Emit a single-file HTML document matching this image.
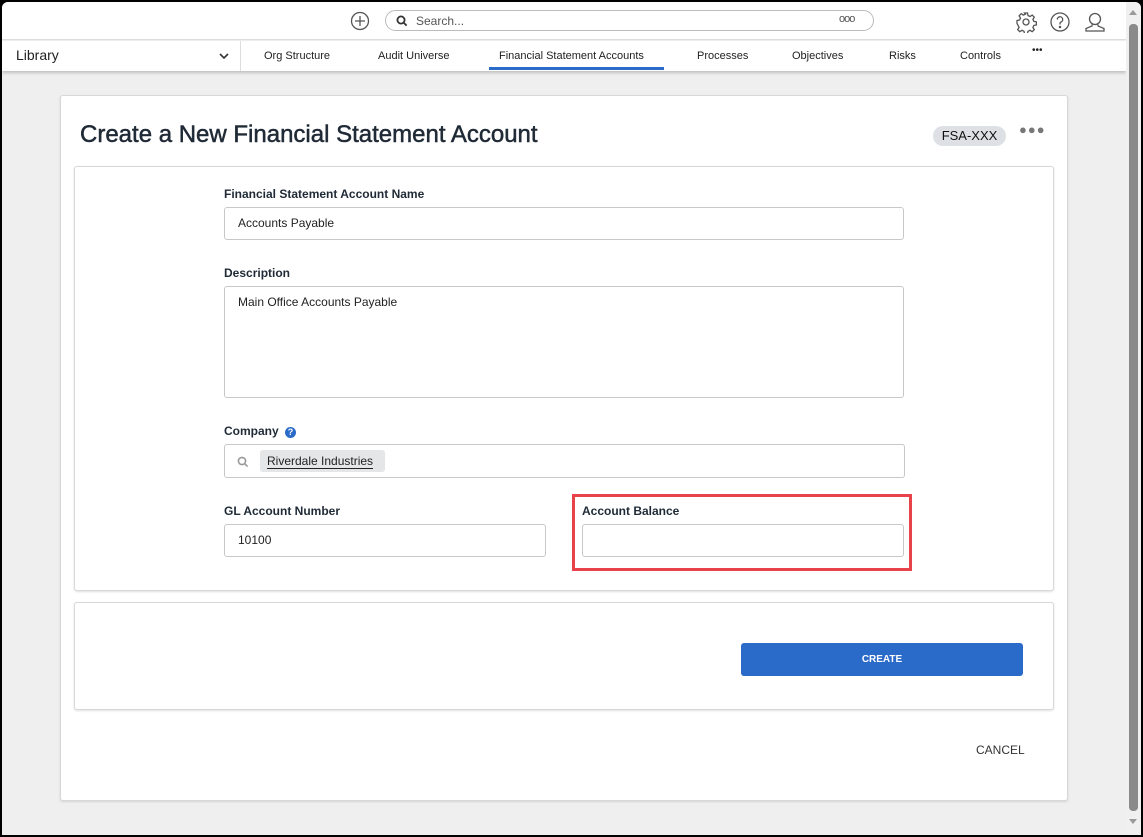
<!DOCTYPE html>
<html><head><style>
*{box-sizing:border-box;margin:0;padding:0}
body{width:1143px;height:837px;background:#000;font-family:"Liberation Sans",sans-serif;overflow:hidden;position:relative;color:#1f2a36}
.win{position:absolute;left:2px;top:2px;width:1139px;height:833px;background:#efefef;border-radius:6px 6px 0 0;overflow:hidden}
.top{position:absolute;left:0;top:0;width:1124px;height:38px;background:#fff;border-bottom:1px solid #ddd}
.nav{position:absolute;left:0;top:39px;width:1124px;height:30px;background:#fff;box-shadow:0 2px 3px rgba(0,0,0,.2)}
.nav span{position:absolute;top:9px;font-size:11px;color:#222}
.abs{position:absolute}
.card{position:absolute;background:#fff;border:1px solid #d8d8d8;border-radius:3px;box-shadow:0 1px 2px rgba(0,0,0,.12)}
.lbl{position:absolute;font-size:12px;font-weight:bold;color:#1f2a36}
.inp{position:absolute;border:1px solid #c8c8c8;border-radius:3px;background:#fff;font-size:12px;color:#222;padding:8px 13px}
.sb{position:absolute;right:0;top:0;width:15px;height:833px;background:#f0f0f0}
</style></head><body><div class="win">
<div class="top">
<svg class="abs" style="left:348px;top:9px" width="20" height="20" viewBox="0 0 20 20" fill="none" stroke="#555" stroke-width="1.3"><circle cx="10" cy="10" r="8.5"/><path d="M10 5v10M5 10h10"/></svg>
<div class="abs" style="left:383px;top:8px;width:489px;height:21px;border:1px solid #bbb;border-radius:11px"></div>
<svg class="abs" style="left:394px;top:13px" width="12" height="12" viewBox="0 0 12 12" fill="none" stroke="#333" stroke-width="1.8"><circle cx="5" cy="5" r="3.6"/><path d="M7.6 7.6l3 3"/></svg>
<span class="abs" style="left:414px;top:12px;font-size:12px;color:#555">Search...</span>
<span class="abs" style="left:837px;top:11px;font-size:11px;color:#555;letter-spacing:-1px">ooo</span>
<svg class="abs" style="left:1013px;top:9px" width="22" height="22" viewBox="0 0 22 22" fill="none" stroke="#555" stroke-width="1.3"><circle cx="11" cy="11" r="3"/><path d="M9.5 2h3l.5 2.5 2 1 2.2-1.4 2.1 2.1-1.4 2.2 1 2 2.5.5v3l-2.5.5-1 2 1.4 2.2-2.1 2.1-2.2-1.4-2 1-.5 2.5h-3l-.5-2.5-2-1-2.2 1.4-2.1-2.1 1.4-2.2-1-2L2 12.5v-3l2.5-.5 1-2-1.4-2.2 2.1-2.1 2.2 1.4 2-1z"/></svg>
<svg class="abs" style="left:1047px;top:9px" width="22" height="22" viewBox="0 0 22 22" fill="none" stroke="#555" stroke-width="1.3"><circle cx="11" cy="11" r="9"/><path d="M8.3 8.5a2.7 2.7 0 1 1 3.7 2.5c-.7.3-1 .8-1 1.5v1"/><circle cx="11" cy="16" r=".6" fill="#555"/></svg>
<svg class="abs" style="left:1082px;top:9px" width="22" height="22" viewBox="0 0 22 22" fill="none" stroke="#555" stroke-width="1.3"><circle cx="11" cy="8" r="5.5"/><path d="M8 13.5v1.5l-6 2.5v2.5h18v-2.5l-6-2.5v-1.5"/></svg>
</div>
<div class="nav">
<span style="left:14px;top:6px;font-size:14px">Library</span>
<svg class="abs" style="left:217px;top:12px" width="10" height="7" viewBox="0 0 10 7" fill="none" stroke="#333" stroke-width="1.6"><path d="M1 1l4 4 4-4"/></svg>
<div class="abs" style="left:238px;top:0;width:1px;height:30px;background:#ddd"></div>
<span style="left:262px">Org Structure</span>
<span style="left:376px">Audit Universe</span>
<span style="left:497px">Financial Statement Accounts</span>
<div class="abs" style="left:487px;top:26px;width:175px;height:3px;background:#2a6ac8"></div>
<span style="left:695px">Processes</span>
<span style="left:790px">Objectives</span>
<span style="left:887px">Risks</span>
<span style="left:958px">Controls</span>
<span style="left:1030px;top:4px;font-size:10px">•••</span>
</div>
<div class="card" style="left:58px;top:93px;width:1008px;height:706px">
<div class="abs" style="left:19px;top:25px;font-size:24px;color:#1f2a36;-webkit-text-stroke:0.5px #1f2a36">Create a New Financial Statement Account</div>
<div class="abs" style="left:872px;top:30px;width:73px;height:20px;background:#dde0e4;border-radius:10px;font-size:13px;text-align:center;line-height:20px;color:#111">FSA-XXX</div>
<div class="abs" style="left:958px;top:26px;font-size:13px;color:#777;letter-spacing:1px">●●●</div>
</div>
<div class="card" style="left:72px;top:164px;width:980px;height:425px">
<div class="lbl" style="left:149px;top:20px">Financial Statement Account Name</div>
<div class="inp" style="left:149px;top:40px;width:680px;height:33px">Accounts Payable</div>
<div class="lbl" style="left:149px;top:99px">Description</div>
<div class="inp" style="left:149px;top:119px;width:680px;height:112px">Main Office Accounts Payable</div>
<div class="lbl" style="left:149px;top:257px">Company <span style="display:inline-block;width:11px;height:11px;border-radius:50%;background:#2a6ac8;color:#fff;font-size:9px;text-align:center;line-height:11px;margin-left:3px">?</span></div>
<div class="inp" style="left:149px;top:277px;width:681px;height:34px"></div>
<svg class="abs" style="left:162px;top:289px" width="12" height="12" viewBox="0 0 12 12" fill="none" stroke="#999" stroke-width="1.6"><circle cx="5" cy="5" r="3.6"/><path d="M7.6 7.6l3 3"/></svg>
<div class="abs" style="left:185px;top:283px;width:125px;height:22px;background:#e4e6e8;border-radius:3px;font-size:12px;padding:4px 7px;color:#222"><span style="border-bottom:1px solid #222">Riverdale Industries</span></div>
<div class="lbl" style="left:149px;top:337px">GL Account Number</div>
<div class="inp" style="left:149px;top:357px;width:322px;height:33px">10100</div>
<div class="abs" style="left:497px;top:327px;width:340px;height:77px;border:3px solid #e8434a"></div>
<div class="lbl" style="left:507px;top:337px">Account Balance</div>
<div class="inp" style="left:507px;top:357px;width:322px;height:33px"></div>
</div>
<div class="card" style="left:72px;top:600px;width:980px;height:108px">
<div class="abs" style="left:666px;top:40px;width:282px;height:33px;background:#2a6ac8;border-radius:3px;color:#fff;font-size:10px;font-weight:bold;text-align:center;line-height:33px">CREATE</div>
</div>
<div class="abs" style="left:974px;top:741px;font-size:12px;color:#333">CANCEL</div>
<div class="sb"><div class="abs" style="left:3px;top:22px;width:9px;height:787px;background:#8a8a8a;border-radius:4px"></div>
<div class="abs" style="left:3px;top:8px;width:0;height:0;border-left:4px solid transparent;border-right:4px solid transparent;border-bottom:5px solid #999"></div>
<div class="abs" style="left:3px;top:817px;width:0;height:0;border-left:4px solid transparent;border-right:4px solid transparent;border-top:5px solid #999"></div></div>
</div></body></html>
